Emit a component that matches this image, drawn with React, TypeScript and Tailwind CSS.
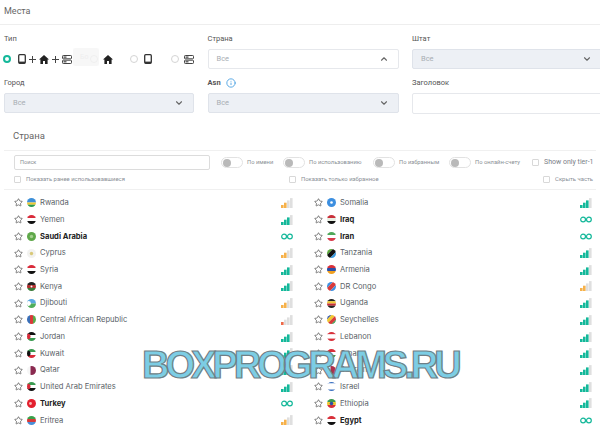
import React from "react";
import { ChevronDown, ChevronUp, Info, Star } from "lucide-react";

type C = { n: string; s: number; b?: boolean; f: string[]; v?: boolean; r?: boolean; w?: number[]; dot?: string; dx?: number; dr?: number };

const T = "#14b89a";
const left: C[] = [
  { n: "Rwanda", s: 2, f: ["#3d8fd8", "#f0c832", "#2a9a50"], w: [4.5, 2.2, 2.3] },
  { n: "Yemen", s: 3, f: ["#d92b3a", "#ffffff", "#111111"] },
  { n: "Saudi Arabia", s: 9, b: true, f: ["#5fa84a"], dot: "#a5d08f", dx: 4.5 },
  { n: "Cyprus", s: 2, f: ["#f2f2f0"], dot: "#d8c878", dx: 4.5 },
  { n: "Syria", s: 3, f: ["#d92b3a", "#ffffff", "#111111"] },
  { n: "Kenya", s: 3, f: ["#222222", "#b03030", "#3a7a3a"], dot: "#ffffff", dx: 4.5, dr: 1 },
  { n: "Djibouti", s: 2, f: ["#5aa8e0", "#4fae5a"], dot: "#ffffff", dx: 1.5, dr: 2.4 },
  { n: "Central African Republic", s: 1, f: ["#3a6fb8", "#d83a3a", "#5aa84a"], v: true, w: [3, 3, 3] },
  { n: "Jordan", s: 3, f: ["#111111", "#ffffff", "#3a9a50"], dot: "#d92b3a", dx: 0.5, dr: 3 },
  { n: "Kuwait", s: 3, f: ["#3a9a50", "#ffffff", "#d92b3a"], dot: "#111111", dx: 0.5, dr: 3 },
  { n: "Qatar", s: 3, f: ["#f6f6f6", "#8a2a50"], v: true, w: [3.5, 5.5] },
  { n: "United Arab Emirates", s: 3, f: ["#3a9a50", "#ffffff", "#111111"], dot: "#d92b3a", dx: 0.5, dr: 3 },
  { n: "Turkey", s: 9, b: true, f: ["#e3202e"], dot: "#f7b7b7", dx: 3.5, dr: 1.4 },
  { n: "Eritrea", s: 2, f: ["#3aa04a", "#d83a3a", "#4a8fd8"] },
];
const right: C[] = [
  { n: "Somalia", s: 3, f: ["#3d8fe0"], dot: "#ffffff", dx: 4.5, dr: 1.3 },
  { n: "Iraq", s: 9, b: true, f: ["#c8303a", "#e8efe4", "#111111"] },
  { n: "Iran", s: 9, b: true, f: ["#4fa85a", "#ffffff", "#d83a4a"] },
  { n: "Tanzania", s: 3, f: ["#5aa83a", "#111111", "#3a9ae0"], r: true },
  { n: "Armenia", s: 3, f: ["#d8303a", "#2a50a8", "#f0a020"] },
  { n: "DR Congo", s: 2, f: ["#3d8fe0", "#d83a3a", "#3d8fe0"], r: true },
  { n: "Uganda", s: 3, f: ["#222222", "#f0c832", "#c8303a", "#222222"] },
  { n: "Seychelles", s: 3, f: ["#2a50a8", "#f0c832", "#d83a3a", "#3a9a50"], r: true },
  { n: "Lebanon", s: 3, f: ["#d8303a", "#ffffff", "#d8303a"], w: [2.4, 4.2, 2.4] },
  { n: "Oman", s: 3, f: ["#d8303a", "#ffffff", "#3a9a50"] },
  { n: "Bahrain", s: 3, f: ["#ffffff", "#b0304a"], v: true, w: [3.5, 5.5] },
  { n: "Israel", s: 3, f: ["#3a70c0", "#ffffff", "#3a70c0"], w: [1.5, 6, 1.5] },
  { n: "Ethiopia", s: 3, f: ["#3a9a50", "#f0c832", "#d8303a"], dot: "#2a50a8", dx: 4.5, dr: 1.8 },
  { n: "Egypt", s: 9, b: true, f: ["#d8303a", "#ffffff", "#111111"] },
];

function Flag({ c }: { c: C }) {
  const id = "cp" + c.n.replace(/ /g, "");
  const k = c.f.length;
  const span = c.r ? 13 : 9;
  const start = c.r ? -2 : 0;
  const sizes = c.w ?? c.f.map(() => span / k);
  let at = start;
  const rects = c.f.map((col, i) => {
    const o = at;
    at += sizes[i];
    return c.v ? (
      <rect key={i} x={o} y={start} width={sizes[i]} height={span} fill={col} />
    ) : (
      <rect key={i} x={start} y={o} width={span} height={sizes[i]} fill={col} />
    );
  });
  return (
    <svg width="9" height="9" viewBox="0 0 9 9" className="shrink-0">
      <defs>
        <clipPath id={id}>
          <circle cx="4.5" cy="4.5" r="4.5" />
        </clipPath>
      </defs>
      <g clipPath={`url(#${id})`}>
        <g transform={c.r ? "rotate(-45 4.5 4.5)" : undefined}>{rects}</g>
        {c.dot && <circle cx={c.dx ?? 4} cy="4.5" r={c.dr ?? 1.7} fill={c.dot} />}
      </g>
    </svg>
  );
}

function Signal({ s }: { s: number }) {
  if (s === 9) {
    return (
      <svg width="12" height="7" viewBox="0 0 12 7" fill="none" stroke={T} strokeWidth="1.2">
        <circle cx="3.1" cy="3.5" r="2.4" />
        <circle cx="8.9" cy="3.5" r="2.4" />
      </svg>
    );
  }
  const col = s === 1 ? "#ee6a4a" : s === 2 ? "#f6b14a" : T;
  return (
    <svg width="12" height="10" viewBox="0 0 12 10">
      {[0, 1, 2, 3].map((i) => {
        const h = 3 + i * 2.3;
        return <rect key={i} x={i * 3} y={10 - h} width="2.6" height={h} fill={i < s ? col : "#dfdfdf"} />;
      })}
    </svg>
  );
}

function Row({ c }: { c: C }) {
  return (
    <div className="flex h-[16.72px] items-center">
      <Star size={9} strokeWidth={1.6} className="mr-[4px] shrink-0 text-[#333]" />
      <Flag c={c} />
      <span className={`ml-[4px] flex-1 font-['Inter',sans-serif] text-[7.6px] ${c.b ? "font-bold text-[#222]" : "text-[#5a5f67]"}`}>
        {c.n}
      </span>
      <span className="flex w-[12px] justify-center">
        <Signal s={c.s} />
      </span>
    </div>
  );
}

function Radio({ on, cls }: { on?: boolean; cls: string }) {
  return on ? (
    <span className={`h-[8px] w-[8px] shrink-0 rounded-full border-[2.5px] border-[#14b89a] bg-white ${cls}`} />
  ) : (
    <span className={`h-[8px] w-[8px] shrink-0 rounded-full border border-[#d4d4d4] bg-white ${cls}`} />
  );
}

function Phone({ cls }: { cls: string }) {
  return (
    <svg width="8" height="10" viewBox="0 0 8 10" className={`shrink-0 ${cls}`}>
      <rect x="0.7" y="0.7" width="6.6" height="8.6" rx="1" fill="none" stroke="#333" strokeWidth="1.3" />
      <rect x="1" y="7.6" width="6" height="1.6" fill="#333" />
    </svg>
  );
}
function Home({ cls }: { cls: string }) {
  return (
    <svg width="10" height="9" viewBox="0 0 10 9" className={`shrink-0 ${cls}`}>
      <path d="M5 0 L10 4.6 H8.6 V9 H6 V6 H4 V9 H1.4 V4.6 H0 Z" fill="#222" />
    </svg>
  );
}
function Server({ cls }: { cls: string }) {
  return (
    <svg width="10" height="9" viewBox="0 0 10 9" className={`shrink-0 ${cls}`}>
      <rect x="0.5" y="0.5" width="9" height="3.3" rx="0.8" fill="none" stroke="#444" />
      <rect x="0.5" y="5.2" width="9" height="3.3" rx="0.8" fill="none" stroke="#444" />
      <rect x="1.5" y="1.5" width="3" height="1.2" fill="#444" />
      <rect x="1.5" y="6.2" width="3" height="1.2" fill="#444" />
    </svg>
  );
}
function Plus({ cls }: { cls: string }) {
  return (
    <svg width="7" height="7" viewBox="0 0 7 7" className={`shrink-0 ${cls}`}>
      <path d="M3.5 0 V7 M0 3.5 H7" stroke="#444" strokeWidth="1" />
    </svg>
  );
}

function Label({ text, info }: { text: string; info?: boolean }) {
  return (
    <div className="flex h-[19px] items-center gap-[5px] pb-[2px] text-[7.5px] text-[#555]">
      <span className={info ? "font-bold" : ""}>{text}</span>
      {info && <Info size={10} className="text-[#3f9ae0]" />}
    </div>
  );
}

function Field({ label, disabled, up, info, empty }: { label: string; disabled?: boolean; up?: boolean; info?: boolean; empty?: boolean }) {
  return (
    <div>
      <Label text={label} info={info} />
      <div
        className={`flex items-center justify-between rounded-[2px] border pl-[8px] pr-[9px] text-[7.5px] text-[#a8adb3] ${
          empty ? "h-[21px]" : "h-[20px]"
        } ${disabled ? "border-[#dfe3ea] bg-[#edf0f5]" : "border-[#e6e8ec] bg-white"}`}
      >
        <span>{empty ? "" : "Все"}</span>
        {!empty &&
          (up ? (
            <ChevronUp size={10} strokeWidth={2.6} className="text-[#666]" />
          ) : (
            <ChevronDown size={10} strokeWidth={2.6} className="text-[#666]" />
          ))}
      </div>
    </div>
  );
}

function Toggle({ label, w }: { label: string; w: string }) {
  return (
    <div className={`flex items-center gap-[4px] ${w}`}>
      <span className="flex h-[11px] w-[22px] shrink-0 items-center rounded-full border border-[#e2e2e2] bg-white pl-[1px]">
        <span className="h-[8px] w-[8px] rounded-full bg-[#b9b9b9]" />
      </span>
      <span className="whitespace-nowrap text-[5.8px] text-[#8a8f96]">{label}</span>
    </div>
  );
}

function Check({ label, cls }: { label: string; cls?: string }) {
  return (
    <div className={`flex items-center gap-[5px] whitespace-nowrap text-[5.9px] text-[#8a8f96] ${cls ?? ""}`}>
      <span className="h-[7px] w-[7px] shrink-0 rounded-[1px] border border-[#d8d8d8] bg-white" />
      {label}
    </div>
  );
}

export default function App() {
  return (
    <div className="relative h-[430px] w-[600px] overflow-hidden bg-white font-['Roboto',sans-serif]">
      <div className="flex h-[25px] items-center border-b border-[#eeeeee] pl-[4px] text-[9px] text-[#666]">Места</div>

      <div className="grid grid-cols-[190px_191px_190px] gap-x-[13.5px] pl-[4px] pt-[5px]">
        <div className="relative">
          <Label text="Тип" />
          <div className="flex h-[20px] items-center">
            <Radio on cls="-ml-[1px]" />
            <Phone cls="ml-[6.5px]" />
            <Plus cls="ml-[3px]" />
            <Home cls="ml-[3.5px]" />
            <Plus cls="ml-[2.5px]" />
            <Server cls="ml-[3.5px]" />
            <Radio cls="ml-[18px]" />
            <Home cls="ml-[5px]" />
            <Radio cls="ml-[17px]" />
            <Phone cls="ml-[6px]" />
            <Radio cls="ml-[19px]" />
            <Server cls="ml-[5px]" />
          </div>
          <div className="absolute left-[69px] top-[18px] flex h-[18px] w-[26px] items-center rounded-[2px] bg-[#f5f5f5]/80 pl-[7px] text-[7px] text-[#eeeeee]">
            Бо
          </div>
        </div>
        <Field label="Страна" up />
        <Field label="Штат" disabled />
      </div>

      <div className="grid grid-cols-[190px_191px_190px] gap-x-[13.5px] pl-[4px] pt-[5px]">
        <Field label="Город" disabled />
        <Field label="Asn" disabled info />
        <Field label="Заголовок" empty />
      </div>

      <div className="flex h-[36px] items-end pb-[7px] pl-[13px] text-[9.5px] text-[#666]">Страна</div>

      <div className="mx-[4px] border-t border-[#f0f0f0] pt-[4px]">
        <div className="flex h-[15px] items-center pl-[10px]">
          <div className="flex h-[15px] w-[196px] shrink-0 items-center rounded-[2px] border border-[#dcdcdc] pl-[5px] text-[5.6px] text-[#8a8f96]">
            Поиск
          </div>
          <div className="ml-[11px] flex items-center">
            <Toggle label="По имени" w="w-[62px]" />
            <Toggle label="По использованию" w="w-[90px]" />
            <Toggle label="По избранным" w="w-[76px]" />
            <Toggle label="По онлайн-счету" w="w-[83px]" />
            <div className="flex items-center gap-[5px] whitespace-nowrap text-[7px] text-[#7b8088]">
              <span className="h-[7px] w-[7px] shrink-0 rounded-[1px] border border-[#d8d8d8] bg-white" />
              Show only tier-1
            </div>
          </div>
        </div>
        <div className="flex h-[20px] items-center border-b border-[#f0f0f0] pl-[10px] pr-[3px]">
          <Check label="Показать ранее использовавшиеся" cls="w-[275px]" />
          <Check label="Показать только избранное" cls="flex-1" />
          <Check label="Скрыть часть" />
        </div>
      </div>

      <div className="grid grid-cols-[279px_278px] gap-x-[21px] pl-[14px] pt-[4.5px]">
        <div>{left.map((c) => <Row key={c.n} c={c} />)}</div>
        <div>{right.map((c) => <Row key={c.n} c={c} />)}</div>
      </div>

      <div className="absolute left-[142px] top-[346px] whitespace-nowrap font-['Liberation_Sans',sans-serif] text-[38px] font-bold leading-[38px] tracking-[-4px] text-[#7ccde4] [-webkit-text-stroke:1.2px_#6f7f86]">
        BOXPROGRAMS.RU
      </div>
    </div>
  );
}
